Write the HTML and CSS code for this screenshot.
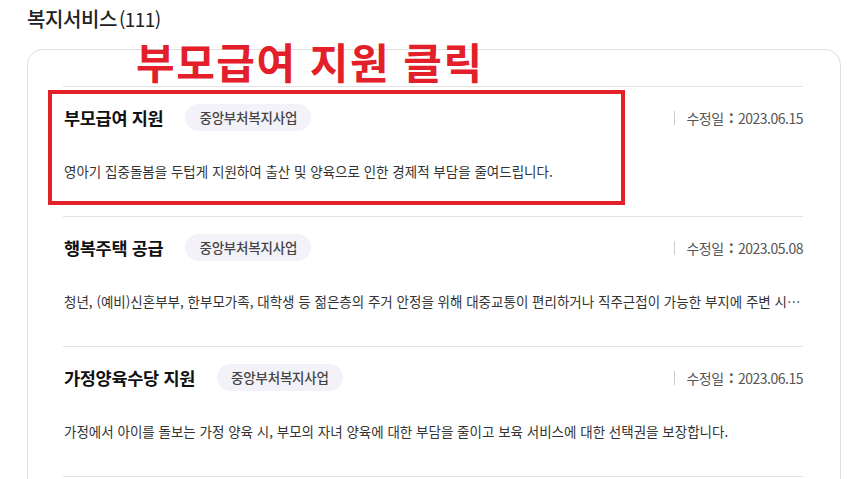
FILE: index.html
```html
<!DOCTYPE html>
<html lang="ko">
<head>
<meta charset="utf-8">
<link rel="stylesheet" href="styles.css">
</head>
<body>
<div class="page">
  <h2 class="heading"><span class="heading-name">복지서비스</span><span class="heading-count">(111)</span></h2>
  <div class="card">
    <ul class="list">
      <li class="item">
        <div class="item-head">
          <span class="item-title">부모급여 지원</span>
          <span class="badge">중앙부처복지사업</span>
          <span class="date">수정일 <span class="colon">:</span>2023.06.15</span>
        </div>
        <p class="desc">영아기 집중돌봄을 두텁게 지원하여 출산 및 양육으로 인한 경제적 부담을 줄여드립니다.</p>
      </li>
      <li class="item">
        <div class="item-head">
          <span class="item-title">행복주택 공급</span>
          <span class="badge">중앙부처복지사업</span>
          <span class="date">수정일 <span class="colon">:</span>2023.05.08</span>
        </div>
        <p class="desc">청년, (예비)신혼부부, 한부모가족, 대학생 등 젊은층의 주거 안정을 위해 대중교통이 편리하거나 직주근접이 가능한 부지에 주변 시…</p>
      </li>
      <li class="item">
        <div class="item-head">
          <span class="item-title">가정양육수당 지원</span>
          <span class="badge">중앙부처복지사업</span>
          <span class="date">수정일 <span class="colon">:</span>2023.06.15</span>
        </div>
        <p class="desc">가정에서 아이를 돌보는 가정 양육 시, 부모의 자녀 양육에 대한 부담을 줄이고 보육 서비스에 대한 선택권을 보장합니다.</p>
      </li>
      <li class="item"></li>
    </ul>
  </div>
</div>
<div class="note">부모급여 지원 클릭</div>
<div class="highlight"></div>
</body>
</html>
```
FILE: styles.css
```css
html, body {
  margin: 0;
  padding: 0;
  background: #fff;
  overflow: hidden;
}
body {
  font-family: "Noto Sans CJK KR", "Noto Sans", sans-serif;
  color: #222;
  width: 863px;
  height: 479px;
  position: relative;
}
.page {
  padding: 5px 22px 0 27px;
}
.heading {
  margin: 0;
  font-size: 20px;
  font-weight: 500;
  line-height: 28px;
  color: #222;
  letter-spacing: -0.4px;
}
.heading-count {
  font-weight: 400;
  font-size: 19px;
  margin-left: 2px;
  letter-spacing: -0.6px;
}
.card {
  margin-top: 16px;
  border: 1px solid #dedede;
  border-radius: 16px;
  padding: 36px 37px 0 35px;
  height: 600px;
}
.list {
  list-style: none;
  margin: 0;
  padding: 0;
}
.item {
  border-top: 1px solid #e2e2e2;
  padding: 17px 0 0 1px;
  height: 112px;
}
.item-head {
  display: flex;
  align-items: center;
  height: 27px;
}
.item-title {
  font-size: 17.5px;
  font-weight: 700;
  color: #111;
  letter-spacing: -0.3px;
}
.badge {
  margin-left: 22px;
  height: 27px;
  line-height: 27px;
  padding: 0 14px;
  border-radius: 14px;
  background: #f3f2f9;
  font-size: 13.5px;
  font-weight: 500;
  color: #444;
  letter-spacing: -0.2px;
}
.date {
  margin-left: auto;
  padding-left: 11px;
  border-left: 1px solid #ccc;
  line-height: 14px;
  font-size: 14px;
  color: #555;
  letter-spacing: -0.5px;
}
.colon {
  margin: 0 5px 0 2px;
  font-weight: 700;
}
.desc {
  margin: 30px 0 0;
  font-size: 13.5px;
  line-height: 20px;
  color: #333;
  white-space: nowrap;
}
.note {
  position: absolute;
  left: 136px;
  top: 32px;
  font-size: 42px;
  font-weight: 700;
  line-height: 58px;
  color: #e3202a;
  letter-spacing: 1.5px;
}
.highlight {
  position: absolute;
  left: 48px;
  top: 90px;
  width: 569px;
  height: 107px;
  border: 4px solid #e3212b;
}
```
